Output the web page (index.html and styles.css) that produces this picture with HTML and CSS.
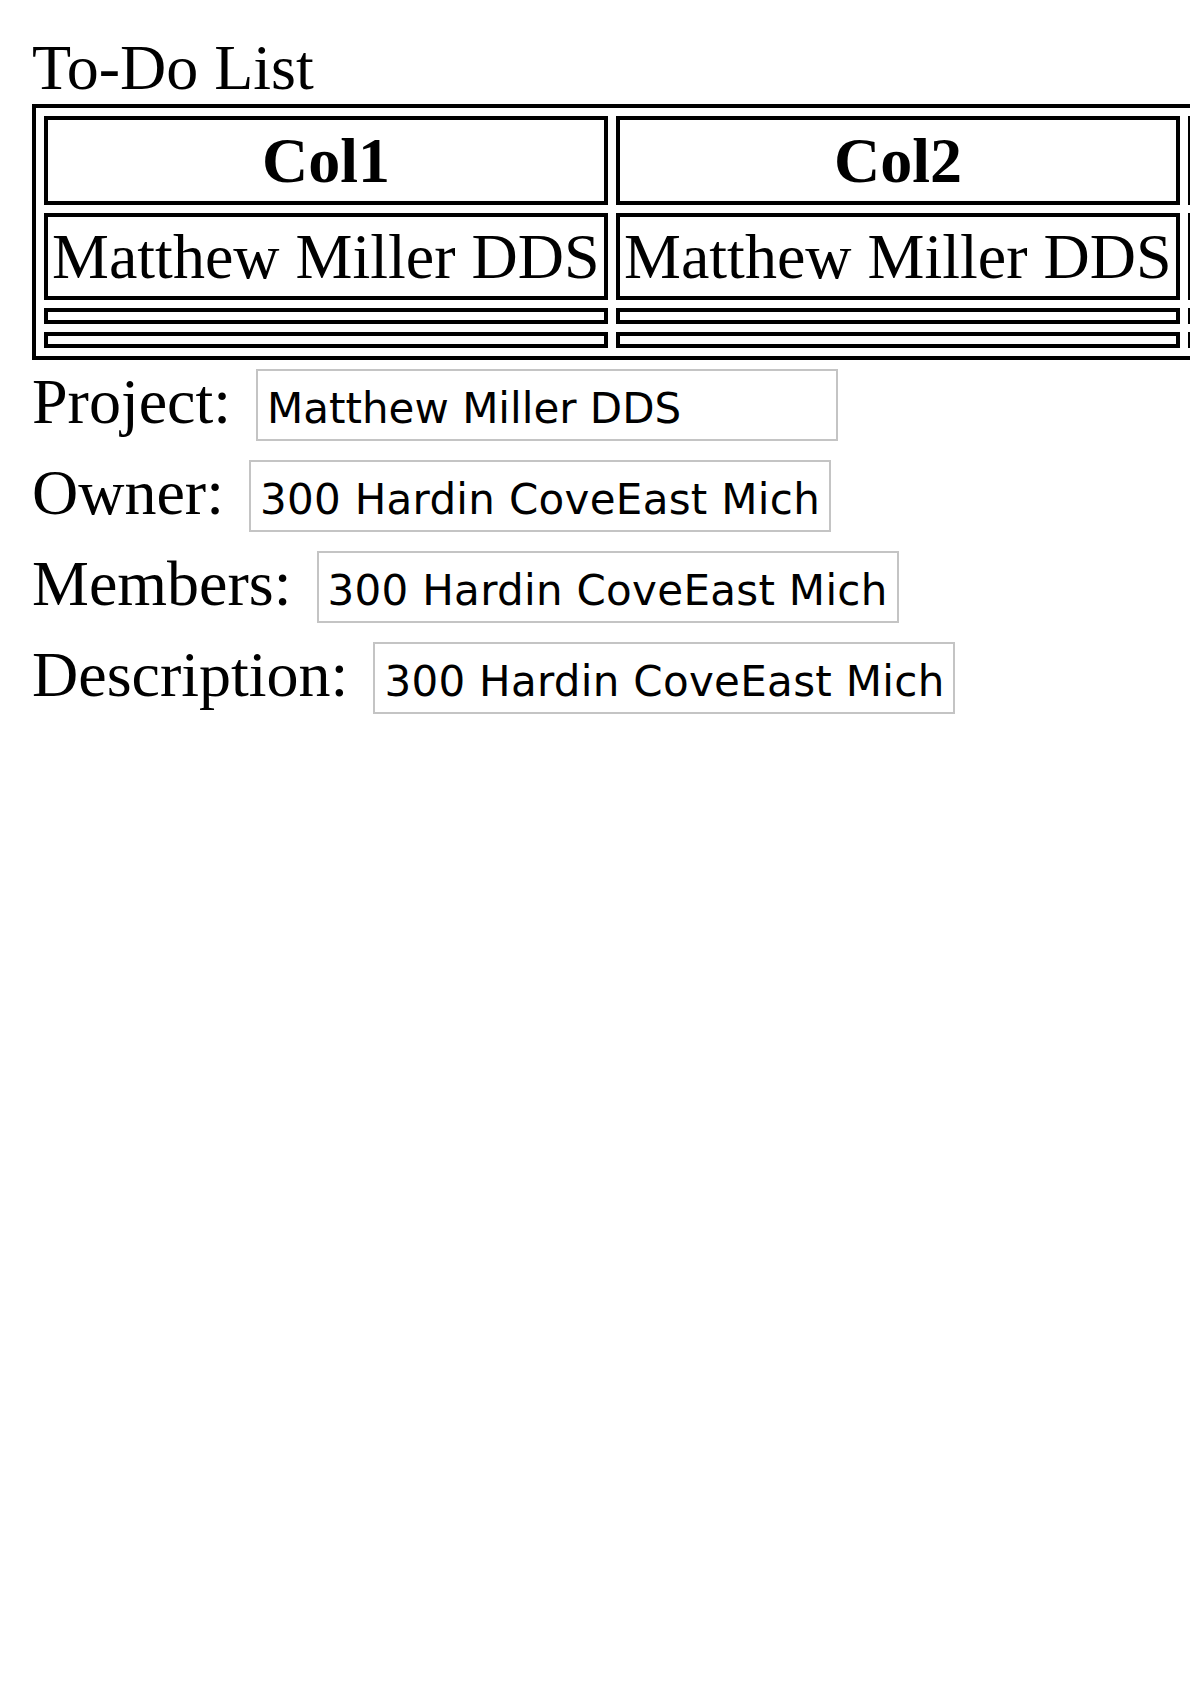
FILE: index.html
```html
<!DOCTYPE html>
<html lang="en">
<head>
<meta charset="utf-8">
<title>To-Do List</title>
<link rel="stylesheet" href="styles.css">
</head>
<body>
<div class="title">To-Do List</div>
<div class="table-clip">
  <table class="todo">
    <thead>
      <tr><th>Col1</th><th>Col2</th><th></th></tr>
    </thead>
    <tbody>
      <tr><td>Matthew Miller DDS</td><td>Matthew Miller DDS</td><td></td></tr>
      <tr class="empty"><td></td><td></td><td></td></tr>
      <tr class="empty"><td></td><td></td><td></td></tr>
    </tbody>
  </table>
</div>
<form class="details">
  <div class="row"><label for="project">Project:</label><input id="project" type="text" value="Matthew Miller DDS"></div>
  <div class="row"><label for="owner">Owner:</label><input id="owner" class="address" type="text" value="300 Hardin CoveEast Michaelfort, MN 48123"></div>
  <div class="row"><label for="members">Members:</label><input id="members" class="address" type="text" value="300 Hardin CoveEast Michaelfort, MN 48123"></div>
  <div class="row"><label for="description">Description:</label><input id="description" class="address" type="text" value="300 Hardin CoveEast Michaelfort, MN 48123"></div>
</form>
</body>
</html>
```

FILE: styles.css
```css
html {
  background: #ffffff;
}

body {
  margin: 32px 0 32px 32px;
  font-family: "Liberation Serif", "Times New Roman", serif;
  font-size: 64px;
  color: #000000;
}

.title {
  line-height: 72px;
}

.table-clip {
  overflow: hidden;
}

.todo {
  border: 4px solid #000000;
  border-spacing: 8px;
  white-space: nowrap;
}

.todo th,
.todo td {
  border: 4px solid #000000;
  padding: 4px;
  width: 548px;
  min-width: 548px;
}

.todo th {
  font-weight: bold;
  text-align: center;
  line-height: 73px;
}

.todo td {
  text-align: left;
  line-height: 71px;
}

.todo .empty td {
  line-height: 0;
  height: 0;
}

.details {
  margin: 5px 0 0 0;
}

.row {
  display: flex;
  align-items: baseline;
  column-gap: 25px;
  margin-bottom: 15px;
}

.row label {
  line-height: normal;
}

.row input {
  box-sizing: border-box;
  width: 582px;
  height: 72px;
  margin: 0;
  padding: 7px 8px 0 9px;
  border: 2px solid #c4c4c4;
  border-radius: 0;
  font-family: "DejaVu Sans", sans-serif;
  font-size: 42px;
  color: #000000;
  background: #ffffff;
  outline: none;
}

.row input.address {
  letter-spacing: 0.3px;
}
```
